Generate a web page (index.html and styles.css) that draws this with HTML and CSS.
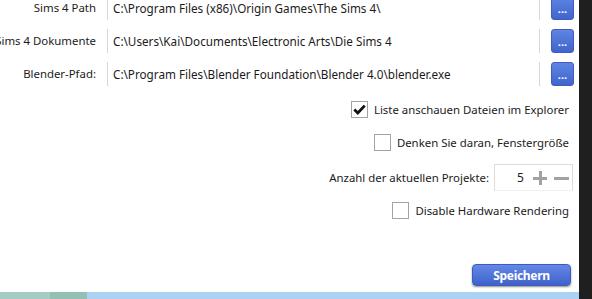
FILE: index.html
```html
<!DOCTYPE html>
<html>
<head>
    <title>Einstellungen</title>
    <link rel="stylesheet" href="styles.css">
</head>
<body>
    <div class="window">
        <div class="panel">
            <div class="paths">
                <label class="path-label">Sims 4 Path</label>
                <div class="path-box">C:\Program Files (x86)\Origin Games\The Sims 4\</div>
                <button class="browse" type="button">...</button>

                <label class="path-label">Sims 4 Dokumente</label>
                <div class="path-box">C:\Users\Kai\Documents\Electronic Arts\Die Sims 4</div>
                <button class="browse" type="button">...</button>

                <label class="path-label">Blender-Pfad:</label>
                <div class="path-box">C:\Program Files\Blender Foundation\Blender 4.0\blender.exe</div>
                <button class="browse" type="button">...</button>
            </div>

            <div class="options">
                <div class="check-row first">
                    <span class="check checked">
                        <svg width="13" height="11" viewBox="0 0 13 11"><path d="M1.3 5.6 L4.8 9 L11.7 1.6" fill="none" stroke="#111" stroke-width="2.8"/></svg>
                    </span>
                    <span>Liste anschauen Dateien im Explorer</span>
                </div>
                <div class="check-row">
                    <span class="check"></span>
                    <span>Denken Sie daran, Fenstergröße</span>
                </div>
                <div class="spin-row">
                    <span>Anzahl der aktuellen Projekte:</span>
                    <div class="spin-box">
                        <span class="spin-value">5</span>
                        <span class="spin-plus"></span>
                        <span class="spin-minus"></span>
                    </div>
                </div>
                <div class="check-row last">
                    <span class="check"></span>
                    <span>Disable Hardware Rendering</span>
                </div>
            </div>

            <div class="footer">
                <button class="btn-save" type="button">Speichern</button>
            </div>

            <div class="taskbar">
                <div class="task-a"></div>
                <div class="task-b"></div>
                <div class="task-c"></div>
            </div>
        </div>
        <div class="edge"></div>
    </div>
</body>
</html>
```

FILE: styles.css
```css
body {
    margin: 0;
    font-family: 'Noto Sans', sans-serif;
    font-size: 11.4px;
    color: #1b1b1b;
    overflow: hidden;
}

.window {
    display: flex;
    width: 592px;
    height: 299px;
}

.panel {
    width: 579px;
    display: flex;
    flex-direction: column;
    background: #ffffff;
}

.edge {
    flex: 1;
    background: #1f1f1f;
}

/* path rows */
.paths {
    display: grid;
    grid-template-columns: 96px 433px 23px;
    grid-template-rows: 33px 33px 33px;
    column-gap: 11px;
    align-items: center;
    margin-top: -9px;
}

.path-label {
    display: flex;
    justify-content: flex-end;
    white-space: nowrap;
}

.path-box {
    height: 24px;
    line-height: 24px;
    border-left: solid 1px #d6d6d6;
    border-right: solid 1px #d6d6d6;
    padding-left: 5px;
    font-size: 11.7px;
    white-space: nowrap;
    overflow: hidden;
    box-sizing: border-box;
}

.browse {
    width: 23px;
    height: 24px;
    padding: 0 0 5px;
    border: solid 1px #3e5cc0;
    border-radius: 3px;
    background: linear-gradient(#5f84e4, #4065cc);
    color: #ffffff;
    font-family: 'Noto Sans', sans-serif;
    font-size: 11px;
    font-weight: 700;
    line-height: 1;
    display: flex;
    align-items: flex-end;
    justify-content: center;
}

/* options */
.options {
    display: flex;
    flex-direction: column;
    align-items: flex-end;
    padding-right: 10px;
}

.check-row {
    display: flex;
    align-items: center;
    gap: 6px;
    height: 22px;
    margin-top: 11px;
}

.check-row.first {  margin-top: 8px;  }
.check-row.last {  margin-top: 8px;  }

.check {
    width: 17px;
    height: 17px;
    border: solid 1px #a3a3a3;
    box-sizing: border-box;
    background: #ffffff;
    display: flex;
    align-items: center;
    justify-content: center;
}

.spin-row {
    display: flex;
    align-items: center;
    gap: 5px;
    margin-top: 11px;
    margin-right: -4px;
}

.spin-box {
    width: 79px;
    height: 27px;
    border: solid 1px #dcdcdc;
    border-bottom-color: #f2f2f2;
    box-sizing: border-box;
    display: flex;
    align-items: center;
    padding-left: 22px;
    font-size: 12px;
}

.spin-value {  width: 16px;  }

.spin-plus,
.spin-minus {
    position: relative;
    width: 14px;
    height: 14px;
}

.spin-plus::before,
.spin-plus::after,
.spin-minus::before {
    content: "";
    position: absolute;
    background: #a2a2a2;
}

.spin-plus::before {  left: 0; right: 0; top: 6px; height: 3px;  }
.spin-plus::after {  top: 0; bottom: 0; left: 6px; width: 3px;  }
.spin-minus {  margin-left: 7px; width: 15px;  }
.spin-minus::before {  left: 0; right: 0; top: 6px; height: 3px;  }

/* footer */
.footer {
    margin-top: auto;
    display: flex;
    justify-content: flex-end;
    padding: 0 8px 6px 0;
}

.btn-save {
    width: 99px;
    height: 22px;
    border: solid 1px #3b5bc2;
    border-radius: 4px;
    background: linear-gradient(#6388e6, #3e62c9);
    box-shadow: 0 1px 2px rgba(0, 0, 0, 0.45);
    color: #ffffff;
    font-family: 'Noto Sans', sans-serif;
    font-size: 12px;
    font-weight: 700;
    letter-spacing: -0.3px;
    padding: 0;
}

.taskbar {
    height: 7px;
    display: flex;
}

.task-a {  width: 50px; background: #a6cbc4;  }
.task-b {  width: 37px; background: #94bfb5;  }
.task-c {  flex: 1; background: #acd2f3;  }
```
